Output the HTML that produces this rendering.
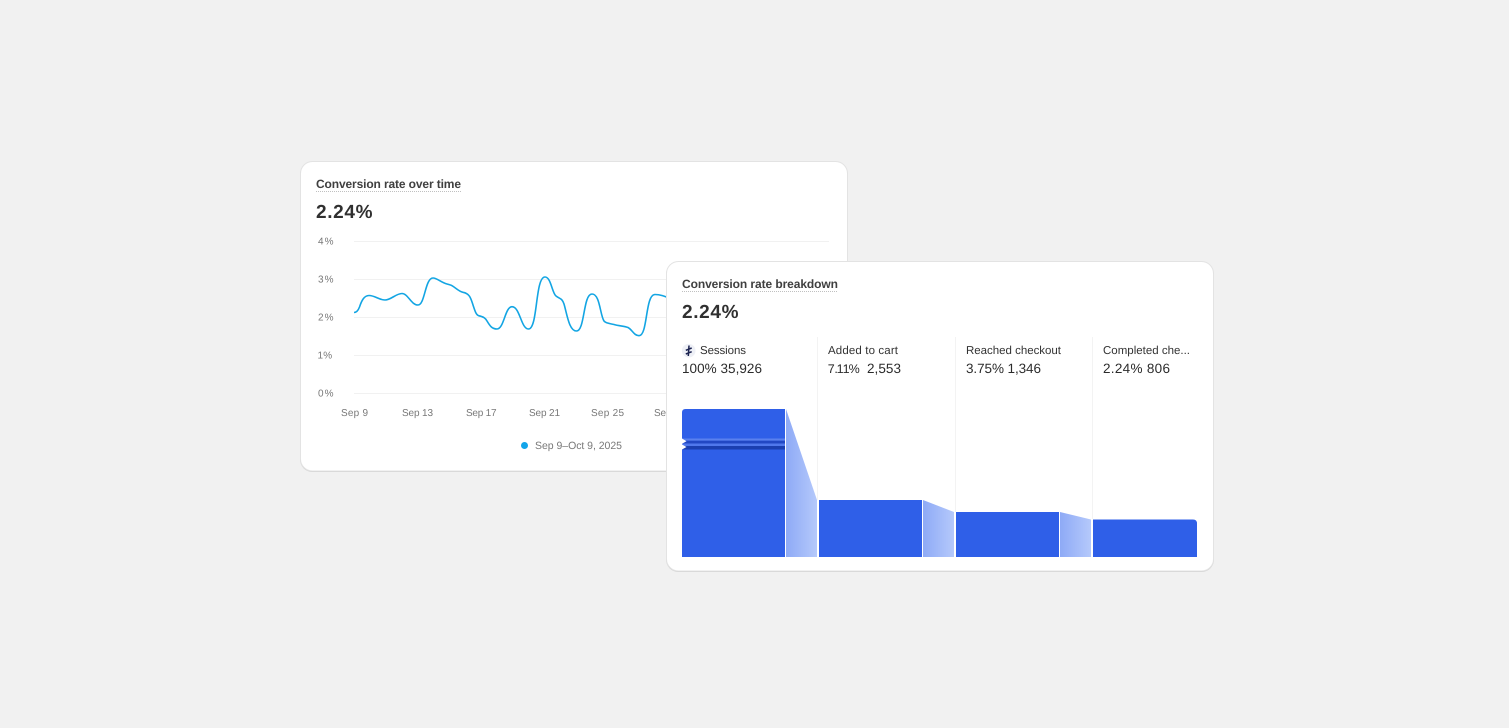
<!DOCTYPE html>
<html lang="en">
<head>
<meta charset="utf-8">
<title>Conversion rate</title>
<style>
html,body{margin:0;padding:0;background:#f1f1f1;width:1509px;height:728px;overflow:hidden}
svg{display:block;position:absolute;left:0;top:0;filter:blur(.3px)}
text{font-family:"Liberation Sans",sans-serif;white-space:pre;font-kerning:none;text-rendering:geometricPrecision}
.t{font-size:12px;font-weight:700;fill:#404040}
.v{font-size:19px;font-weight:700;fill:#303030}
.a{font-size:10px;fill:#787878}
.g{font-size:10.500px;fill:#787878}
.l{font-size:11.500px;fill:#333}
.n{font-size:13.500px;fill:#2b2b2b}
.m{font-size:12.500px;fill:#2b2b2b}
</style>
</head>
<body>
<svg width="1509" height="728" viewBox="0 0 1509 728" xmlns="http://www.w3.org/2000/svg">
<defs>
<linearGradient id="g" x1="0" x2="1" y1="0" y2="0"><stop offset="0" stop-color="#8eaaf6"/><stop offset="1" stop-color="#b5c9fb"/></linearGradient>
</defs>
<rect x="300" y="162" width="548" height="310" rx="12.500" fill="#cfcfcf"/>
<rect x="300.500" y="161.500" width="547" height="309.500" rx="12" fill="#fff" stroke="#e3e3e3"/>
<text class="t" x="316" y="188" textLength="145" lengthAdjust="spacing">Conversion rate over time</text>
<line x1="316" x2="461" y1="191.500" y2="191.500" stroke="#c0c0c0" stroke-dasharray="1 1"/>
<text class="v" x="316" y="218" textLength="56.500" lengthAdjust="spacing">2.24%</text>
<g stroke="#f1f1f1">
<line x1="354" x2="829" y1="241.500" y2="241.500"/><line x1="354" x2="829" y1="279.500" y2="279.500"/><line x1="354" x2="829" y1="317.500" y2="317.500"/><line x1="354" x2="829" y1="355.500" y2="355.500"/><line x1="354" x2="829" y1="393.500" y2="393.500"/>
</g>
<text class="a" x="318" y="244.500" textLength="15.500" lengthAdjust="spacing">4%</text>
<text class="a" x="318" y="282.500" textLength="15.500" lengthAdjust="spacing">3%</text>
<text class="a" x="318" y="320.500" textLength="15.500" lengthAdjust="spacing">2%</text>
<text class="a" x="317.500 323.200" y="358.500">1%</text>
<text class="a" x="318" y="396.500" textLength="15.500" lengthAdjust="spacing">0%</text>
<text class="a" x="341" y="416" textLength="27" lengthAdjust="spacing">Sep 9</text>
<text class="a" x="402" y="416" textLength="31" lengthAdjust="spacing">Sep 13</text>
<text class="a" x="466" y="416" textLength="30.500" lengthAdjust="spacing">Sep 17</text>
<text class="a" x="529" y="416" textLength="31" lengthAdjust="spacing">Sep 21</text>
<text class="a" x="591" y="416" textLength="33" lengthAdjust="spacing">Sep 25</text>
<text class="a" x="654" y="416" textLength="31" lengthAdjust="spacing">Sep 29</text>
<text class="g" x="535" y="449" textLength="87" lengthAdjust="spacing">Sep 9–Oct 9, 2025</text>
<circle cx="524.500" cy="445.500" r="3.500" fill="#13a5ea"/>
<path d="M354 312.500C356 312.500 358 311 359.500 307C361.500 301 364 295.500 369 295.500C375 295.500 379 300 385 300C391 300 396 293.500 402 293.500C408 293.500 411 305 418 305C425 305 425 278 433 278C437 278 441 282.500 447 284C449 284.500 451 285 452 285.700C456 288 459 291.500 463 292.300C470 293.500 471 299 473 305C475 311 476 315 479 315.800C483 316.800 485 317.500 487 321C490 326 492 329 497 329C504 329 505 306.700 512 306.700C520 306.700 521 329 528.500 329C538 329 535 277 545 277C551 277 552 293 556 296C560 299 562 298 564 304C567 314 569 331 576.500 331C585 331 583 294 592 294C600 294 600 315 604 321C606 323.500 610 323.500 614 324.500C619 326 624 326 628 327.500C632 329.500 634 335.700 639 335.700C648 335.700 645 294.500 655 294.500C660 294.500 664 296 672 299" fill="none" stroke="#13a5e3" stroke-width="1.600"/>

<rect x="666" y="262" width="548" height="310" rx="12.500" fill="#cfcfcf"/>
<rect x="666.500" y="261.500" width="547" height="309.500" rx="12" fill="#fff" stroke="#e3e3e3"/>
<text class="t" x="682" y="288" textLength="156" lengthAdjust="spacing">Conversion rate breakdown</text>
<line x1="682" x2="838" y1="291.500" y2="291.500" stroke="#c0c0c0" stroke-dasharray="1 1"/>
<text class="v" x="682" y="318" textLength="56.500" lengthAdjust="spacing">2.24%</text>
<g stroke="#f3f3f3">
<line x1="817.500" x2="817.500" y1="337" y2="500"/><line x1="955.500" x2="955.500" y1="337" y2="512"/><line x1="1092.500" x2="1092.500" y1="337" y2="519"/>
</g>
<circle cx="688.700" cy="350.700" r="6.800" fill="#eef0f6"/>
<path d="M689 345.500L688.300 356M685.800 350.300L691.700 348M685.800 354L691.700 351.700" fill="none" stroke="#1b2350" stroke-width="1.500"/>
<text class="l" x="700" y="354" textLength="46" lengthAdjust="spacing">Sessions</text>
<text class="n" x="682" y="373" textLength="80" lengthAdjust="spacing">100% 35,926</text>
<text class="l" x="828" y="354" textLength="70" lengthAdjust="spacing">Added to cart</text>
<text class="m" x="827.800 834.400 836.600 842.600 848.600" y="373">7.11%</text>
<text class="n" x="867" y="373" textLength="34" lengthAdjust="spacing">2,553</text>
<text class="l" x="966" y="354" textLength="95" lengthAdjust="spacing">Reached checkout</text>
<text class="n" x="966" y="373" textLength="75" lengthAdjust="spacing">3.75% 1,346</text>
<text class="l" x="1103" y="354" textLength="87" lengthAdjust="spacing">Completed che...</text>
<text class="n" x="1103" y="373" textLength="67" lengthAdjust="spacing">2.24% 806</text>

<path d="M682 557V412.500Q682 409 685.500 409H785V557Z" fill="#2f5fe8"/>
<rect x="682" y="438.500" width="103" height="2.200" fill="#5a80ee"/>
<rect x="682" y="440.700" width="103" height="2.800" fill="#2248c4"/>
<rect x="682" y="443.500" width="103" height="2.500" fill="#5078ec"/>
<rect x="682" y="446" width="103" height="3.500" fill="#1b3fb0"/>
<path d="M682 438.500L686.500 441.300L682 443.700ZM682 444.500L686.500 447L682 449.500Z" fill="#fff"/>
<path d="M786 409L817 500V557H786Z" fill="url(#g)"/>
<rect x="819" y="500" width="103" height="57" fill="#2f5fe8"/>
<path d="M923 500L954 512V557H923Z" fill="url(#g)"/>
<rect x="956" y="512" width="103" height="45" fill="#2f5fe8"/>
<path d="M1060 512L1091 519.500V557H1060Z" fill="url(#g)"/>
<path d="M1093 519.500H1193Q1197 519.500 1197 523.500V557H1093Z" fill="#2f5fe8"/>
</svg>
</body>
</html>
